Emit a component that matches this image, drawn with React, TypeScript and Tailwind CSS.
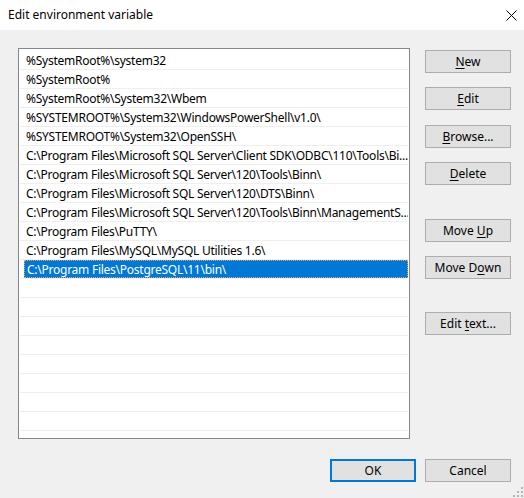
import React from "react";

const paths = [
  "%SystemRoot%\\system32",
  "%SystemRoot%",
  "%SystemRoot%\\System32\\Wbem",
  "%SYSTEMROOT%\\System32\\WindowsPowerShell\\v1.0\\",
  "%SYSTEMROOT%\\System32\\OpenSSH\\",
  "C:\\Program Files\\Microsoft SQL Server\\Client SDK\\ODBC\\110\\Tools\\Bi...",
  "C:\\Program Files\\Microsoft SQL Server\\120\\Tools\\Binn\\",
  "C:\\Program Files\\Microsoft SQL Server\\120\\DTS\\Binn\\",
  "C:\\Program Files\\Microsoft SQL Server\\120\\Tools\\Binn\\ManagementS...",
  "C:\\Program Files\\PuTTY\\",
  "C:\\Program Files\\MySQL\\MySQL Utilities 1.6\\",
  "C:\\Program Files\\PostgreSQL\\11\\bin\\",
];

const SELECTED = 11;
const TOTAL_ROWS = 21;

function WinButton({
  children,
  className = "",
  primary = false,
}: {
  children: React.ReactNode;
  className?: string;
  primary?: boolean;
}) {
  return (
    <button
      className={
        "w-[86px] h-[23px] flex items-center justify-center bg-[#e1e1e1] text-[12px] text-black leading-none " +
        (primary ? "border-2 border-[#0078d7] " : "border border-[#adadad] ") +
        className
      }
    >
      {children}
    </button>
  );
}

function Key({ children }: { children: React.ReactNode }) {
  return <span className="underline underline-offset-[2px] decoration-1">{children}</span>;
}

export default function App() {
  const rows = Array.from({ length: TOTAL_ROWS }, (_, i) => paths[i] ?? "");

  return (
    <div
      className="w-[524px] h-[498px] flex flex-col bg-[#f0f0f0] relative overflow-hidden"
      style={{ fontFamily: '"Noto Sans", "Segoe UI", sans-serif' }}
    >
      {/* Title bar */}
      <div className="h-[30px] bg-white flex items-center justify-between pl-[8px] pr-[7px] shrink-0">
        <span className="text-[12px] text-black">Edit environment variable</span>
        <svg width="11" height="11" viewBox="0 0 11 11">
          <path d="M0.5 0.5 L10.5 10.5 M10.5 0.5 L0.5 10.5" stroke="#000" strokeWidth="1" />
        </svg>
      </div>

      {/* Body */}
      <div className="flex-1 flex flex-col pt-[18px] pl-[18px] pr-[13px]">
        <div className="flex gap-[15px]">
          {/* List */}
          <div className="w-[392px] h-[391px] bg-white border border-[#828790] pt-[2px] overflow-hidden">
            {rows.map((p, i) => (
              <div key={i} className="h-[19px] mx-[1px] border-b border-[#efefef] flex">
                {i === SELECTED ? (
                  <div className="ml-[4px] flex-1 h-[18px] bg-[#0078d7] border border-dotted border-[#f7a04a] text-white text-[12px] leading-[17px] tracking-[-0.25px] pl-[2px] whitespace-nowrap overflow-hidden">
                    {p}
                  </div>
                ) : (
                  <div className="ml-[6px] flex-1 h-[18px] pt-[1px] text-black text-[12px] leading-[18px] tracking-[-0.25px] whitespace-nowrap overflow-hidden">
                    {p}
                  </div>
                )}
              </div>
            ))}
          </div>

          {/* Side buttons */}
          <div className="flex flex-col pt-[2px]">
            <WinButton>
              <Key>N</Key>ew
            </WinButton>
            <WinButton className="mt-[14px]">
              <Key>E</Key>dit
            </WinButton>
            <WinButton className="mt-[15px]">
              <Key>B</Key>rowse...
            </WinButton>
            <WinButton className="mt-[14px]">
              <Key>D</Key>elete
            </WinButton>
            <WinButton className="mt-[34px]">
              Move&nbsp;<Key>U</Key>p
            </WinButton>
            <WinButton className="mt-[14px]">
              Move D<Key>o</Key>wn
            </WinButton>
            <WinButton className="mt-[33px]">
              Edit&nbsp;<Key>t</Key>ext...
            </WinButton>
          </div>
        </div>

        {/* Bottom buttons */}
        <div className="flex justify-end gap-[9px] mt-[20px]">
          <WinButton primary>OK</WinButton>
          <WinButton>Cancel</WinButton>
        </div>
      </div>

      {/* Resize grip */}
      <svg width="10" height="10" viewBox="0 0 10 10" className="absolute right-[1px] bottom-[1px]">
        <rect x="8" y="0" width="2" height="2" fill="#b4b4b4" />
        <rect x="4" y="4" width="2" height="2" fill="#b4b4b4" />
        <rect x="8" y="4" width="2" height="2" fill="#b4b4b4" />
        <rect x="0" y="8" width="2" height="2" fill="#b4b4b4" />
        <rect x="4" y="8" width="2" height="2" fill="#b4b4b4" />
        <rect x="8" y="8" width="2" height="2" fill="#b4b4b4" />
      </svg>
    </div>
  );
}
